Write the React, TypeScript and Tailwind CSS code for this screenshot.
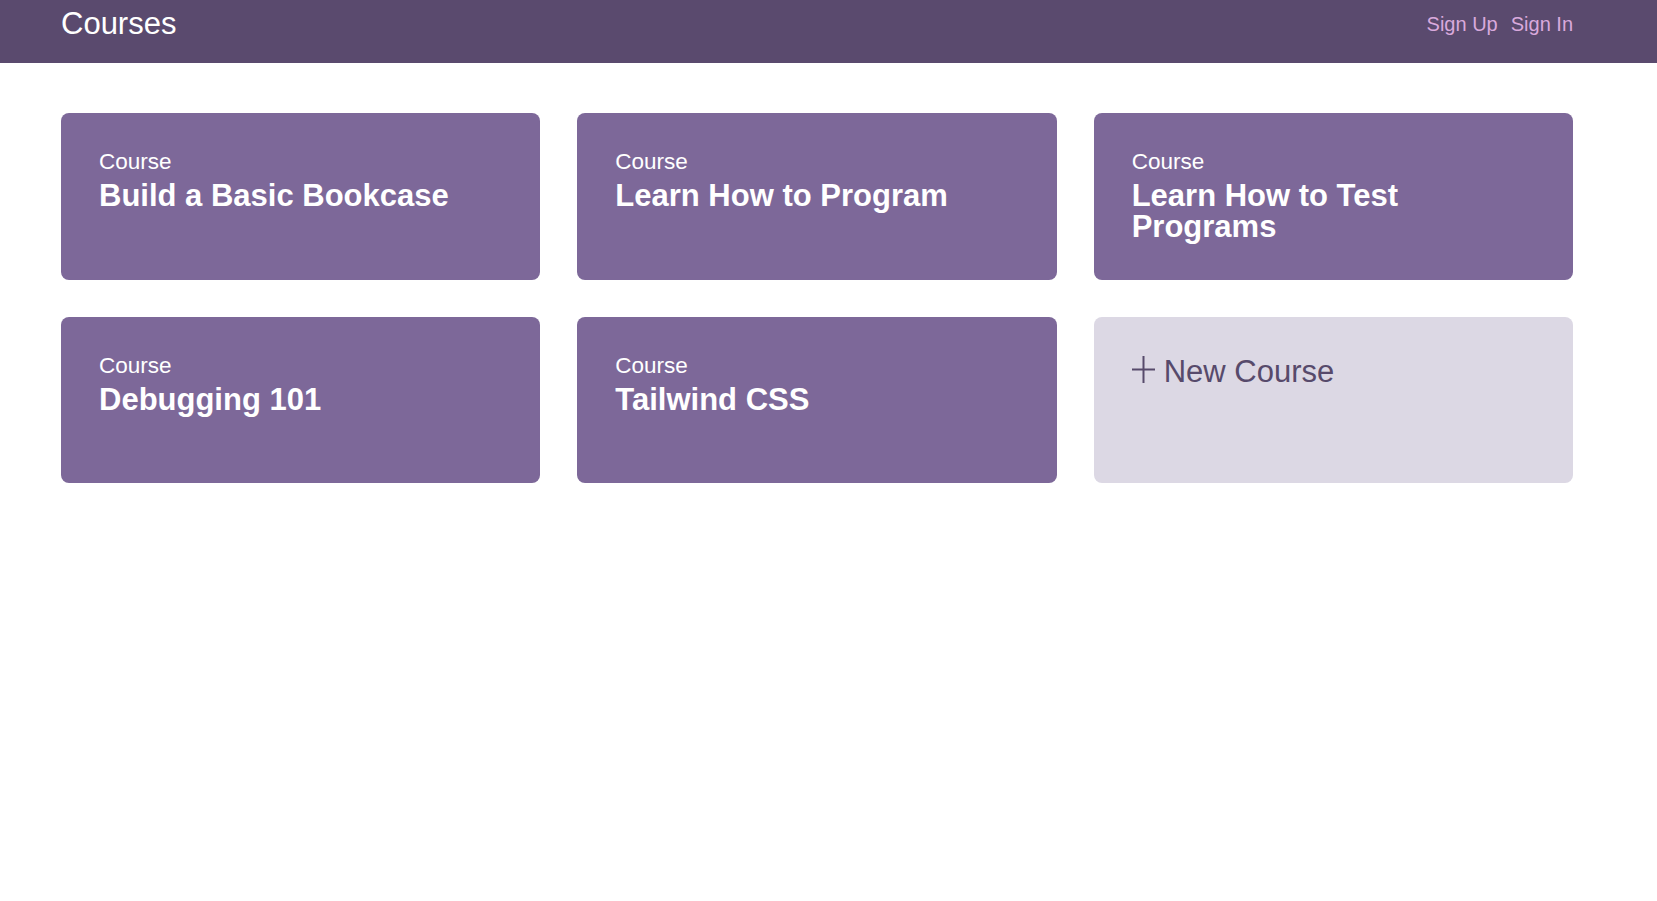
import React from 'react';

interface CourseType {
    id: number;
    title: string;
}

const courses: CourseType[] = [
    { id: 1, title: "Build a Basic Bookcase" },
    { id: 2, title: "Learn How to Program" },
    { id: 3, title: "Learn How to Test Programs" },
    { id: 4, title: "Debugging 101" },
    { id: 5, title: "Tailwind CSS" },
];

const CourseCard: React.FC<{ course: CourseType }> = ({ course }) => (
    <a href="#" className="block rounded-lg bg-[#7d6899] px-[38px] pt-[36px] text-white">
        <div className="text-[22.5px] leading-[25px]">Course</div>
        <div className="mt-[6px] text-[31px] font-bold leading-[31px]">{course.title}</div>
    </a>
)

export default function App() {
    return (
        <div className="min-h-screen bg-white" style={{ fontFamily: '"Liberation Sans", Arial, sans-serif' }}>
            <header className="h-[63px] bg-[#5a4a6e]">
                <div className="flex justify-between pl-[61px] pr-[84px]">
                    <h1 className="pt-[8px] text-[31px] leading-[31px] text-white">Courses</h1>
                    <nav className="flex gap-[13px] pt-[13px] text-[20px] leading-[22px] text-[#d9a9dc]">
                        <a href="#">Sign Up</a>
                        <a href="#">Sign In</a>
                    </nav>
                </div>
            </header>
            <main className="pl-[61px] pr-[84px] pt-[50px]">
                <div className="grid grid-cols-3 grid-rows-[167px_166px] gap-[37px]">
                    {courses.map(course => (
                        <CourseCard key={course.id} course={course} />
                    ))}
                    <a href="#" className="flex items-start rounded-lg bg-[#dcd8e4] px-[38px] pt-[40px] text-[#574a6b]">
                        <svg width="23" height="27" viewBox="0 0 23 27" className="mr-[9px] mt-[-1px]">
                            <path d="M11.5 0v27M0 13.5h23" stroke="currentColor" strokeWidth="2" fill="none" />
                        </svg>
                        <span className="text-[31px] leading-[30px]">New Course</span>
                    </a>
                </div>
            </main>
        </div>
    )
}
